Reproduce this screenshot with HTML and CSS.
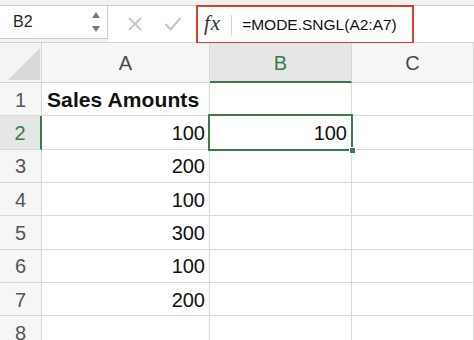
FILE: index.html
```html
<!DOCTYPE html>
<html lang="en">
<head>
    <meta charset="UTF-8">
    <meta name="viewport" content="width=device-width, initial-scale=1.0">
    <title>MODE.SNGL</title>
    <link rel="stylesheet" href="styles.css">
</head>
<body>
    <div class="toolbar">
        <div class="namebox">
            <span class="ref">B2</span>
            <svg class="spin" width="10" height="22" viewBox="0 0 10 22">
                <polygon points="5,1 9,7 1,7" fill="#7a7a7a"/>
                <polygon points="1,15 9,15 5,21" fill="#7a7a7a"/>
            </svg>
        </div>
        <div class="formula">
            <div class="actions">
                <svg width="16" height="16" viewBox="0 0 16 16">
                    <path d="M2 2 L14 14 M14 2 L2 14" stroke="#c6c6c6" stroke-width="2" fill="none"/>
                </svg>
                <svg width="18" height="16" viewBox="0 0 18 16">
                    <path d="M1.5 8 L6.5 13.5 L16.5 2" stroke="#c6c6c6" stroke-width="2" fill="none"/>
                </svg>
            </div>
            <div class="entry">
                <span class="fx">fx</span>
                <span class="sep"></span>
                <span class="text">=MODE.SNGL(A2:A7)</span>
            </div>
        </div>
    </div>

    <div class="sheet">
        <div class="corner"><span class="tri"></span></div>
        <div class="colhead">A</div>
        <div class="colhead active">B</div>
        <div class="colhead">C</div>

        <div class="rowhead">1</div>
        <div class="cell bold">Sales Amounts</div>
        <div class="cell"></div>
        <div class="cell"></div>

        <div class="rowhead active">2</div>
        <div class="cell num">100</div>
        <div class="cell num selected">100<span class="handle"></span></div>
        <div class="cell"></div>

        <div class="rowhead">3</div>
        <div class="cell num">200</div>
        <div class="cell"></div>
        <div class="cell"></div>

        <div class="rowhead">4</div>
        <div class="cell num">100</div>
        <div class="cell"></div>
        <div class="cell"></div>

        <div class="rowhead">5</div>
        <div class="cell num">300</div>
        <div class="cell"></div>
        <div class="cell"></div>

        <div class="rowhead">6</div>
        <div class="cell num">100</div>
        <div class="cell"></div>
        <div class="cell"></div>

        <div class="rowhead">7</div>
        <div class="cell num">200</div>
        <div class="cell"></div>
        <div class="cell"></div>

        <div class="rowhead">8</div>
        <div class="cell"></div>
        <div class="cell"></div>
        <div class="cell"></div>
    </div>
</body>
</html>
```

FILE: styles.css
```css
* {
    box-sizing: border-box;
}

body {
    margin: 0;
    font-family: "Liberation Sans", Arial, sans-serif;
    background: #fff;
    overflow: hidden;
}

.toolbar {
    height: 42px;
    background: #f2f2f2;
    padding-top: 5px;
    display: flex;
    align-items: flex-start;
}

.namebox {
    width: 108px;
    height: 34px;
    background: #fff;
    border: 1px solid #cbcbcb;
    border-left: none;
    display: flex;
    align-items: center;
    justify-content: space-between;
    padding: 0 6px 0 13px;
}

.ref {
    font-size: 16px;
    color: #222;
}

.formula {
    flex: 1;
    height: 37px;
    background: #fff;
    border-top: 1px solid #cbcbcb;
    display: flex;
    align-items: flex-start;
}

.actions {
    width: 88px;
    height: 36px;
    display: flex;
    align-items: center;
    gap: 21px;
    padding-left: 19px;
}

.entry {
    width: 218px;
    height: 39px;
    margin-top: -1px;
    border: 2px solid #d8402f;
    display: flex;
    align-items: center;
    padding-left: 6px;
}

.fx {
    font-family: "Liberation Serif", "Times New Roman", serif;
    font-style: italic;
    font-size: 21px;
    letter-spacing: 1px;
    color: #333;
    margin-top: -3px;
}

.sep {
    width: 1px;
    height: 20px;
    background: #d6d6d6;
    margin: 0 10px 0 10px;
}

.text {
    font-size: 15.5px;
    color: #111;
}

.sheet {
    display: grid;
    grid-template-columns: 42px 168px 142px 1fr;
    grid-template-rows: 40px repeat(8, 33.34px);
    border-top: 1px solid #d4d4d4;
}

.corner {
    background: #f4f4f4;
    border-right: 1px solid #d4d4d4;
    border-bottom: 1px solid #d4d4d4;
    position: relative;
}

.tri {
    position: absolute;
    left: 8px;
    top: 5px;
    width: 32px;
    height: 32px;
    background: #d9d9d9;
    clip-path: polygon(100% 0, 100% 100%, 0 100%);
}

.colhead {
    background: #f6f6f6;
    border-right: 1px solid #d9d9d9;
    border-bottom: 1px solid #d4d4d4;
    display: flex;
    align-items: center;
    justify-content: center;
    font-size: 20px;
    color: #4a4a4a;
    padding-top: 2px;
}

.colhead.active {
    background: #e6e6e6;
    color: #3b7a4c;
    border-bottom: 2px solid #3b7a4c;
}

.rowhead {
    background: #f6f6f6;
    border-right: 1px solid #d4d4d4;
    border-bottom: 1px solid #d9d9d9;
    display: flex;
    align-items: center;
    justify-content: center;
    font-size: 20px;
    color: #555;
    padding-top: 2px;
}

.rowhead.active {
    background: #e6e6e6;
    color: #3b7a4c;
    border-right: 2px solid #3b7a4c;
}

.cell {
    border-right: 1px solid #dadada;
    border-bottom: 1px solid #dadada;
    display: flex;
    align-items: center;
    font-size: 20px;
    color: #111;
    padding: 2px 4px 0 5px;
    white-space: nowrap;
}

.cell.bold {
    font-weight: bold;
    font-size: 21px;
    letter-spacing: 0.1px;
    padding-left: 5px;
}

.cell.num {
    justify-content: flex-end;
}

.cell.selected {
    position: relative;
}

.cell.selected::after {
    content: "";
    position: absolute;
    left: -2px;
    top: -2px;
    right: -2px;
    bottom: -2px;
    border: 2px solid #3b7a4c;
}

.handle {
    position: absolute;
    right: -5px;
    bottom: -5px;
    width: 7px;
    height: 7px;
    background: #3b7a4c;
    border: 1px solid #fff;
    z-index: 1;
}
```
